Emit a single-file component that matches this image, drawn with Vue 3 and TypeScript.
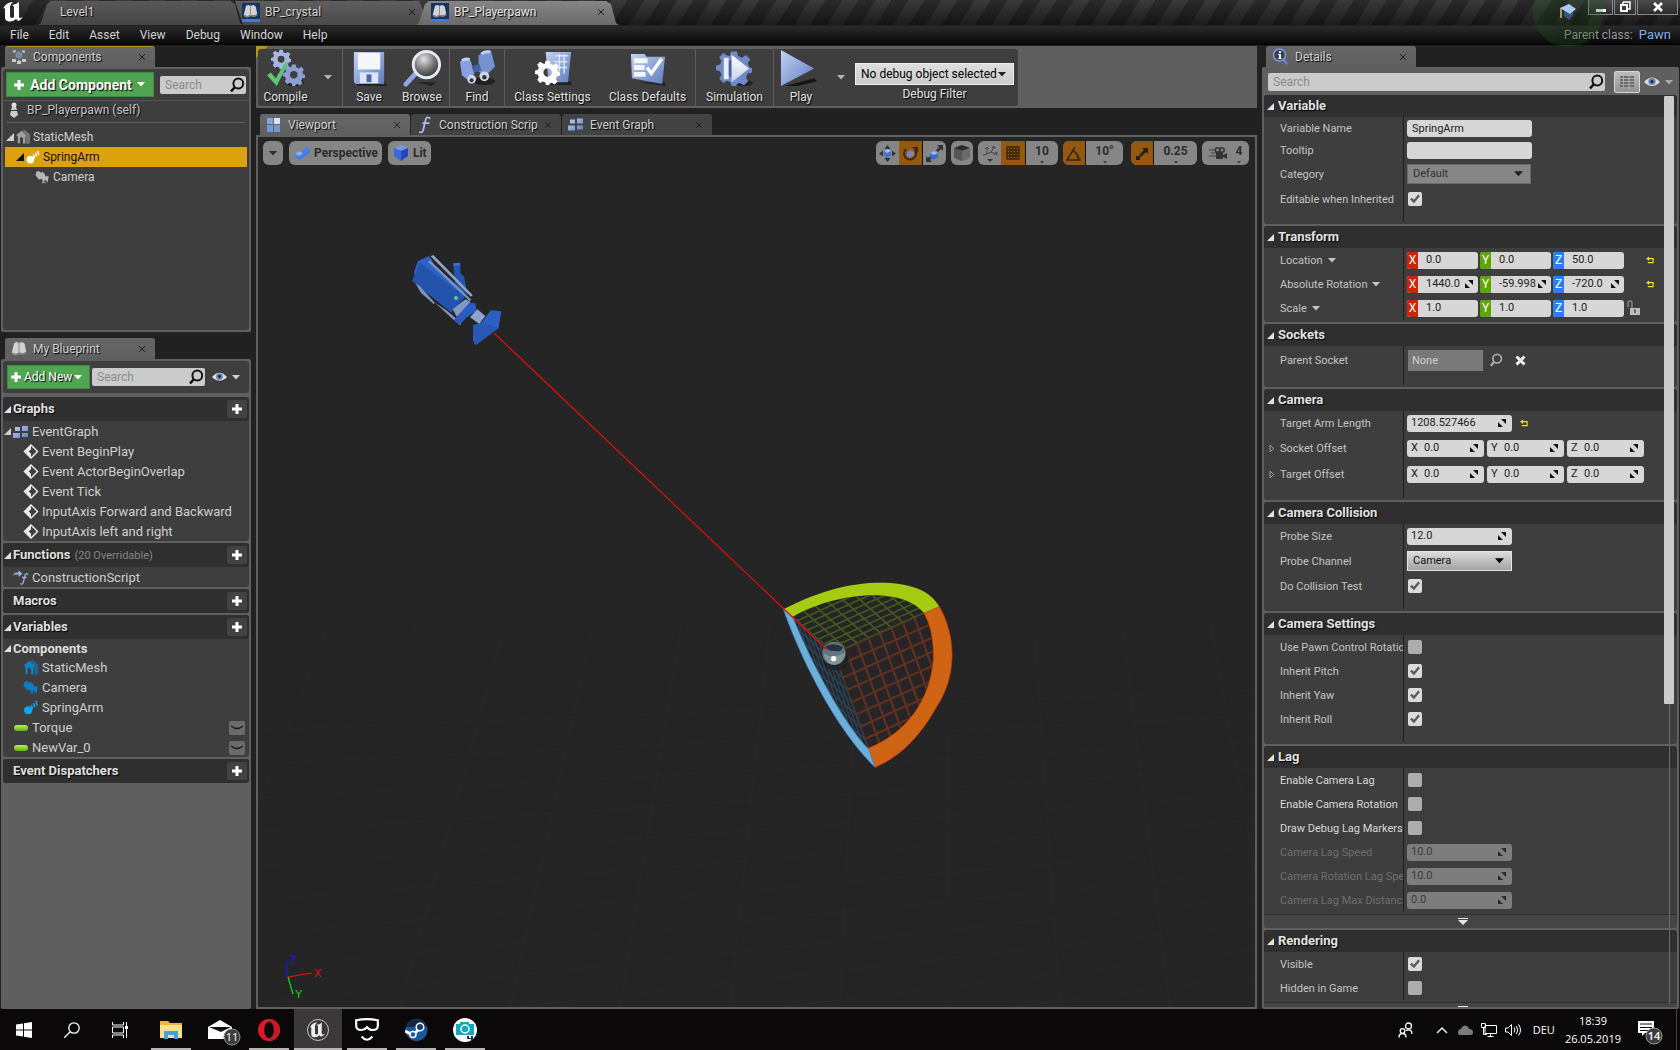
<script setup lang="ts">
type Axis = { axis: string; value: string; spin?: boolean }
type Row = {
  label: string
  kind: 'text' | 'select' | 'check' | 'vector' | 'offset' | 'num' | 'socket'
  size?: 'short' | 'mid' | 'tall'
  value?: string
  checked?: boolean
  disabled?: boolean
  bright?: boolean
  menu?: boolean
  reset?: boolean
  lock?: boolean
  axes?: Axis[]
}
type Section = { title: string; rows: Row[]; tight?: boolean; more?: boolean }

const menus = ['File', 'Edit', 'Asset', 'View', 'Debug', 'Window', 'Help']

const events = [
  'Event BeginPlay',
  'Event ActorBeginOverlap',
  'Event Tick',
  'InputAxis Forward and Backward',
  'InputAxis left and right',
]
const componentVars = [
  { name: 'StaticMesh', icon: 'i-mesh', color: '#0b83c4' },
  { name: 'Camera', icon: 'i-cam', color: '#0b7fc4' },
  { name: 'SpringArm', icon: 'i-spring', color: '#12a5f4' },
]
const plainVars = ['Torque', 'NewVar_0']

const axes = (x: string, y: string, z: string, spin = false): Axis[] => [
  { axis: 'X', value: x, spin },
  { axis: 'Y', value: y, spin },
  { axis: 'Z', value: z, spin },
]

const sections: Section[] = [
  {
    title: 'Variable',
    rows: [
      { label: 'Variable Name', kind: 'text', size: 'short', value: 'SpringArm' },
      { label: 'Tooltip', kind: 'text', size: 'short', value: '' },
      { label: 'Category', kind: 'select', size: 'mid', value: 'Default', disabled: true },
      { label: 'Editable when Inherited', kind: 'check', checked: true },
    ],
  },
  {
    title: 'Transform',
    tight: true,
    rows: [
      { label: 'Location', kind: 'vector', menu: true, reset: true, axes: axes('0.0', '0.0', '50.0') },
      { label: 'Absolute Rotation', kind: 'vector', menu: true, reset: true, axes: axes('1440.0', '-59.998', '-720.0', true) },
      { label: 'Scale', kind: 'vector', menu: true, lock: true, axes: axes('1.0', '1.0', '1.0') },
    ],
  },
  { title: 'Sockets', rows: [{ label: 'Parent Socket', kind: 'socket', size: 'tall', value: 'None' }] },
  {
    title: 'Camera',
    rows: [
      { label: 'Target Arm Length', kind: 'num', value: '1208.527466', reset: true },
      { label: 'Socket Offset', kind: 'offset', size: 'mid', axes: axes('0.0', '0.0', '0.0', true) },
      { label: 'Target Offset', kind: 'offset', size: 'mid', axes: axes('0.0', '0.0', '0.0', true) },
    ],
  },
  {
    title: 'Camera Collision',
    rows: [
      { label: 'Probe Size', kind: 'num', value: '12.0' },
      { label: 'Probe Channel', kind: 'select', size: 'mid', value: 'Camera' },
      { label: 'Do Collision Test', kind: 'check', checked: true },
    ],
  },
  {
    title: 'Camera Settings',
    rows: [
      { label: 'Use Pawn Control Rotation', kind: 'check' },
      { label: 'Inherit Pitch', kind: 'check', checked: true },
      { label: 'Inherit Yaw', kind: 'check', checked: true },
      { label: 'Inherit Roll', kind: 'check', checked: true },
    ],
  },
  {
    title: 'Lag',
    tight: true,
    more: true,
    rows: [
      { label: 'Enable Camera Lag', kind: 'check', bright: true },
      { label: 'Enable Camera Rotation', kind: 'check', bright: true },
      { label: 'Draw Debug Lag Markers', kind: 'check', bright: true },
      { label: 'Camera Lag Speed', kind: 'num', value: '10.0', disabled: true },
      { label: 'Camera Rotation Lag Speed', kind: 'num', value: '10.0', disabled: true },
      { label: 'Camera Lag Max Distance', kind: 'num', value: '0.0', disabled: true },
    ],
  },
  {
    title: 'Rendering',
    tight: true,
    more: true,
    rows: [
      { label: 'Visible', kind: 'check', checked: true },
      { label: 'Hidden in Game', kind: 'check' },
    ],
  },
]

const fieldId = (s: string, l: string) => (s + '-' + l).toLowerCase().replace(/[^a-z]+/g, '-')

type P = [number, number]
/* Lines of a skewed grid spanned by two screen-space vectors */
const mesh = (o: P, a: P, b: P, n: number) => {
  const out: { x1: number; y1: number; x2: number; y2: number }[] = []
  for (let i = 0; i <= n; i++) {
    const t = i / n
    out.push({ x1: o[0] + a[0] * t, y1: o[1] + a[1] * t, x2: o[0] + a[0] * t + b[0], y2: o[1] + a[1] * t + b[1] })
    out.push({ x1: o[0] + b[0] * t, y1: o[1] + b[1] * t, x2: o[0] + b[0] * t + a[0], y2: o[1] + b[1] * t + a[1] })
  }
  return out
}
const redMesh = mesh([192, 250], [310, -139], [118, 330], 9)
const greenMesh = mesh([192, 250], [310, -139], [-142, -126], 9)
const blueMesh = mesh([192, 250], [-142, -126], [118, 330], 9)

const floor = Array.from({ length: 12 }, (_, i) => ({
  a: `M258 ${730 + i * 34}L1255 ${690 + i * 26}`,
  b: `M${330 + i * 88} 620L${180 + i * 110} 1007`,
}))
</script>

<template>
  <div class="editor">
    <svg width="0" height="0" class="defs" aria-hidden="true">
      <defs>
        <linearGradient id="g-blue" x1="0" y1="0" x2="1" y2="1"><stop offset="0" stop-color="#c3d2f4" /><stop offset="1" stop-color="#5f7cbf" /></linearGradient>
        <linearGradient id="g-white" x1="0" y1="0" x2="0" y2="1"><stop offset="0" stop-color="#fff" /><stop offset="1" stop-color="#c4d0ea" /></linearGradient>
        <linearGradient id="g-pill" x1="0" y1="0" x2="0" y2="1"><stop offset="0" stop-color="#b7f05c" /><stop offset="1" stop-color="#5fb40c" /></linearGradient>
        <radialGradient id="g-lens" cx=".4" cy=".3" r=".8"><stop offset="0" stop-color="#e4e4e4" /><stop offset=".5" stop-color="#777" /><stop offset="1" stop-color="#1d1d1d" /></radialGradient>
      </defs>
      <symbol id="i-x" viewBox="0 0 8 8"><path d="M1 1l6 6M7 1L1 7" stroke="currentColor" stroke-width="1" /></symbol>
      <symbol id="i-plus" viewBox="0 0 12 12"><path d="M4.500 1h3v3.500h3.500v3h-3.500v3.500h-3v-3.500H1v-3h3.500z" fill="currentColor" /></symbol>
      <symbol id="i-down" viewBox="0 0 10 6"><path d="M0 0h10L5 5.500z" fill="currentColor" /></symbol>
      <symbol id="i-open" viewBox="0 0 8 8"><path d="M8 0v8H0z" fill="currentColor" /></symbol>
      <symbol id="i-shut" viewBox="0 0 6 10"><path d="M.8 1.300v7.400L5 5z" fill="none" stroke="currentColor" /></symbol>
      <symbol id="i-find" viewBox="0 0 16 16"><circle cx="9.300" cy="6.500" r="4.900" fill="none" stroke="currentColor" stroke-width="2" /><path d="M6 10l-4 4.500" stroke="currentColor" stroke-width="2.600" /></symbol>
      <symbol id="i-eye" viewBox="0 0 18 12"><path d="M1 6Q9-3 17 6Q9 14 1 6z" fill="#dcdcdc" /><circle cx="9" cy="5.500" r="3.600" fill="#6580b5" /><circle cx="9" cy="5.500" r="1.500" fill="#1c2540" /></symbol>
      <symbol id="i-spin" viewBox="0 0 8 8"><path d="M3 0h5v5zM0 3v5h5z" fill="currentColor" /></symbol>
      <symbol id="i-reset" viewBox="0 0 9 8"><path d="M3.500 0v5L0 2.500z" fill="currentColor" /><path d="M3 2.500h5V7H2" fill="none" stroke="currentColor" stroke-width="1.300" /></symbol>
      <symbol id="i-mesh" viewBox="0 0 16 16"><path d="M6 1l4-1 6 5v10l-3 1-2-1V8L8 4z" fill="currentColor" opacity=".55" /><path d="M0 6l6-5 5.500 5.500L10.500 8v7.500H8V9.500L6 8 4.500 9v6H2V7z" fill="currentColor" /></symbol>
      <symbol id="i-cam" viewBox="0 0 16 16"><path d="M1 2l3-1 2 2 2-1 3 3v2l4 0-1 7-3-3-2 2-2-3-3 1-4-5z" fill="currentColor" /><path d="M8 10l-1 5 6 0z" fill="currentColor" opacity=".6" /></symbol>
      <symbol id="i-spring" viewBox="0 0 16 16"><circle cx="5" cy="11" r="4.300" fill="currentColor" /><path d="M8.500 5l1 5M11 3l1 5M13.500 1l1 5" stroke="currentColor" stroke-width="1.600" /></symbol>
      <symbol id="i-event" viewBox="0 0 16 16"><path d="M8 1l7 7-7 7-7-7z" fill="none" stroke="#eee" stroke-width="1.500" /><path d="M1.500 8L8 1.500v4L5.500 8 8 10.500v4z" fill="#eee" /></symbol>
      <symbol id="i-graph" viewBox="0 0 16 14"><path d="M2 2h5v4H2zM9 1h6v5H9zM0 8h7v5H0zM9 8h6v4H9z" fill="url(#g-blue)" /></symbol>
      <symbol id="i-func" viewBox="0 0 16 20"><path d="M14 3c-3-3-5-1-5.500 2L6 15.500C5.500 18 4 19 1.500 17.500M5 8h8" fill="none" stroke="#a9bce9" stroke-width="2" /></symbol>
      <symbol id="i-cfunc" viewBox="0 0 17 16"><path d="M0 6q1-4 6-3.500V0l4 4-4 3.500V5Q2 4 0 6z" fill="#93acdb" /><path d="M16 5c-2-2-3-.5-3.500 1.500L11 13c-.5 2-1.500 2.500-3 1.500M9.500 8h5" fill="none" stroke="#93acdb" stroke-width="1.500" /></symbol>
      <symbol id="i-book" viewBox="0 0 20 18"><path d="M4 2l3-1 3 1 4-1 3 2 2 10-4 2-5-1-4 2-5-2z" fill="#d2d2d2" /><path d="M10 2v12" stroke="#777" /><path d="M1 14l5 2 4-2 5 1 4-2v2l-4 2-5-1-4 2-5-2z" fill="#8a8a8a" /></symbol>
      <symbol id="i-gear" viewBox="-12 -12 24 24"><path d="M-2-11h4l.7 3 2.600 1.100 2.700-1.700 2.800 2.800-1.700 2.700L10.200-.5 12 0v3l-3 .7-1.100 2.600 1.500 2.500-2.800 2.700-2.700-1.600-2 .8L1.500 12h-3l-.9-2.600-2.200-.9-2.500 1.500-2.700-2.800 1.500-2.500-1.100-2.600L-12 1.500v-3l2.700-.9 1-2.300-1.600-2.500 2.800-2.800 2.500 1.600L-2.700-8zM0-4a4 4 0 100 8 4 4 0 000-8z" fill="currentColor" /></symbol>
      <symbol id="i-logo" viewBox="0 0 24 24"><path d="M1 9Q4 2 11 2Q8 4 8 7v9q0 2 2 2 1 0 2-1V7q0-1-2-2 4 0 7-3v15q0 2 4 0-2 3-5 4l-2-2q-3 3-7 2.500-4-.5-4-4V9Q3 7 1 9z" fill="currentColor" /></symbol>
    </svg>

    <header class="titlebar">
      <svg class="logo" viewBox="0 0 24 24" aria-label="Unreal"><use href="#i-logo" /></svg>
      <nav class="doc-tabs" aria-label="Documents">
        <div class="doc level"><span>Level1</span></div>
        <div class="doc crystal">
          <svg width="18" height="19" viewBox="0 0 18 19"><rect width="18" height="16" fill="#173460" /><rect y="16" width="18" height="3" fill="#3c7be0" /><use href="#i-book" width="15" height="14" x="1" y="1" /></svg>
          <span>BP_crystal</span>
          <button class="x" aria-label="Close"><svg width="8" height="8"><use href="#i-x" /></svg></button>
        </div>
        <div class="doc pawn">
          <svg width="18" height="19" viewBox="0 0 18 19"><rect width="18" height="16" fill="#173460" /><rect y="16" width="18" height="3" fill="#3c7be0" /><use href="#i-book" width="15" height="14" x="1" y="1" /></svg>
          <span>BP_Playerpawn</span>
          <button class="x" aria-label="Close"><svg width="8" height="8"><use href="#i-x" /></svg></button>
        </div>
      </nav>
      <div class="glow">
        <svg width="18" height="16" viewBox="0 0 18 16"><path d="M5 7v5l5 4 4-5V6z" fill="#33567f" /><path d="M1 4l9-4 7 5-6 5z" fill="#a9cdf2" /><path d="M2 4v10" stroke="#d9b873" stroke-width="1.500" /></svg>
      </div>
      <div class="win">
        <button class="w25" aria-label="Minimize"><svg width="12" height="12"><path d="M1 8h10v3H1z" fill="#fff" /></svg></button>
        <button class="w22" aria-label="Restore"><svg width="12" height="12"><path d="M4 1h7v7H9M4 1v2" fill="none" stroke="#fff" stroke-width="1.500" /><path d="M2 4h6v6H2z" fill="none" stroke="#fff" stroke-width="2" /></svg></button>
        <button class="w41" aria-label="Close"><svg width="12" height="12"><path d="M2 2l8 8M10 2l-8 8" stroke="#fff" stroke-width="2.600" /></svg></button>
      </div>
    </header>

    <div class="menubar">
      <nav><button v-for="m in menus" :key="m">{{ m }}</button></nav>
      <p>Parent class: <a href="#pawn">Pawn</a></p>
    </div>

    <main class="work">
      <aside class="left">
        <section class="dock comps">
          <div class="tab gold">
            <svg width="16" height="15" viewBox="0 0 16 15"><circle cx="8" cy="5" r="3.500" fill="#7d8aa3" /><path d="M3 3V1h2M11 1h2v2M8 10v2" fill="none" stroke="#c9c9c9" stroke-width="1.500" /><path d="M1 9h4v3H1zM11 9h4v3h-4zM6 11h4v3H6z" fill="#c9c9c9" /></svg>
            <span>Components</span>
            <button class="x" aria-label="Close"><svg width="8" height="8"><use href="#i-x" /></svg></button>
          </div>
          <div class="frame">
            <div class="inner">
              <div class="row-tools">
                <button class="green big"><svg width="12" height="12"><use href="#i-plus" /></svg><span>Add Component</span><svg width="8" height="5"><use href="#i-down" /></svg></button>
                <label class="search"><input type="search" placeholder="Search" aria-label="Search components" /><svg width="16" height="16"><use href="#i-find" /></svg></label>
              </div>
              <div class="self"><svg width="10" height="16" viewBox="0 0 10 16"><circle cx="5" cy="3" r="2.500" fill="#ddd" /><path d="M3 5h4l1 3H2zM2 9h6l1 4-4 3-4-3z" fill="#ccc" /></svg><span>BP_Playerpawn (self)</span></div>
              <ul class="tree small">
                <li class="lv0"><svg width="8" height="8"><use href="#i-open" /></svg><svg class="ico" width="14" height="14" color="#a2a2a2"><use href="#i-mesh" /></svg>StaticMesh</li>
                <li class="lv1 sel"><svg width="8" height="8" color="#111"><use href="#i-open" /></svg><svg class="ico" width="14" height="14" color="#fff"><use href="#i-spring" /></svg>SpringArm</li>
                <li class="lv2"><svg class="ico" width="15" height="14" color="#b4b4b4"><use href="#i-cam" /></svg>Camera</li>
              </ul>
            </div>
          </div>
        </section>

        <section class="dock blueprint">
          <div class="tab">
            <svg width="16" height="15"><use href="#i-book" /></svg>
            <span>My Blueprint</span>
            <button class="x" aria-label="Close"><svg width="8" height="8"><use href="#i-x" /></svg></button>
          </div>
          <div class="frame stack">
            <div class="block tools">
              <button class="green"><svg width="12" height="12"><use href="#i-plus" /></svg><span>Add New</span><svg width="8" height="5"><use href="#i-down" /></svg></button>
              <label class="search"><input type="search" placeholder="Search" aria-label="Search blueprint" /><svg width="16" height="16"><use href="#i-find" /></svg></label>
              <button class="bare" aria-label="View options"><svg width="17" height="12"><use href="#i-eye" /></svg><svg width="8" height="5"><use href="#i-down" /></svg></button>
            </div>
            <div class="block">
              <h3><svg width="7" height="7"><use href="#i-open" /></svg>Graphs<button aria-label="Add graph"><svg width="12" height="12"><use href="#i-plus" /></svg></button></h3>
              <ul class="tree">
                <li class="in0"><svg width="7" height="7"><use href="#i-open" /></svg><svg class="ico" width="16" height="14"><use href="#i-graph" /></svg>EventGraph</li>
                <li v-for="e in events" :key="e" class="in1"><svg class="ico" width="16" height="15"><use href="#i-event" /></svg>{{ e }}</li>
              </ul>
            </div>
            <div class="block">
              <h3><svg width="7" height="7"><use href="#i-open" /></svg>Functions<small>(20 Overridable)</small><button aria-label="Add function"><svg width="12" height="12"><use href="#i-plus" /></svg></button></h3>
              <ul class="tree">
                <li class="in2"><svg class="ico" width="16" height="15"><use href="#i-cfunc" /></svg>ConstructionScript</li>
              </ul>
            </div>
            <div class="block"><h3><i></i>Macros<button aria-label="Add macro"><svg width="12" height="12"><use href="#i-plus" /></svg></button></h3></div>
            <div class="block">
              <h3><svg width="7" height="7"><use href="#i-open" /></svg>Variables<button aria-label="Add variable"><svg width="12" height="12"><use href="#i-plus" /></svg></button></h3>
              <ul class="tree">
                <li class="head"><svg width="7" height="7"><use href="#i-open" /></svg>Components</li>
                <li v-for="c in componentVars" :key="c.name" class="in1"><svg class="ico" width="16" height="15" :color="c.color"><use :href="'#' + c.icon" /></svg>{{ c.name }}</li>
                <li v-for="v in plainVars" :key="v" class="in2"><svg class="ico" width="16" height="14"><rect x="1" y="4" width="14" height="6" rx="3" fill="url(#g-pill)" /></svg>{{ v }}<button class="lid" aria-label="Toggle visibility"><svg width="16" height="8" viewBox="0 0 16 8"><path d="M2 2q6 5 12 0" fill="none" stroke="#1c1c1c" stroke-width="1.300" /></svg></button></li>
              </ul>
            </div>
            <div class="block"><h3><i></i>Event Dispatchers<button aria-label="Add dispatcher"><svg width="12" height="12"><use href="#i-plus" /></svg></button></h3></div>
          </div>
        </section>
      </aside>

      <div class="center">
        <div class="toolbar">
          <div class="tools-in">
            <button class="tool w55"><svg viewBox="0 0 40 40"><ellipse cx="29" cy="34" rx="10" ry="4" fill="#222" /><use href="#i-gear" x="5" y="0" width="21" height="21" color="#a6b7e6" /><use href="#i-gear" x="17" y="15" width="23" height="23" color="#8d9ed2" /><path d="M1 27l4-3 5 6L20 13l3 1L11 38z" fill="#5fc474" /></svg><span>Compile</span></button>
            <button class="drop w29" aria-label="Compile options"><svg width="8" height="5"><use href="#i-down" /></svg></button>
            <hr />
            <button class="tool w52"><svg viewBox="0 0 40 40"><path d="M6 34h30l2 4H8z" fill="#222" /><path d="M4 3h31v33H6l-2-2z" fill="url(#g-blue)" /><path d="M8 4h23v17H8z" fill="#f5f7fd" /><path d="M10 24h19v11H10z" fill="#dde4f4" /><path d="M17 26h5v8h-5z" fill="#4c65a5" /></svg><span>Save</span></button>
            <button class="tool w54"><svg viewBox="0 0 40 40"><path d="M14 34h20l-5 4z" fill="#222" /><path d="M13 25L3 36" stroke="#8ea6df" stroke-width="5" stroke-linecap="round" /><circle cx="24" cy="16" r="13.500" fill="url(#g-lens)" stroke="#e3e9f7" stroke-width="3" /></svg><span>Browse</span></button>
            <hr />
            <button class="tool w54"><svg viewBox="0 0 40 40"><ellipse cx="27" cy="33" rx="11" ry="4" fill="#202020" /><path d="M2 13q5-5 11-1l4 13-8 6-5-4z" fill="#86a1dd" /><path d="M21 7q6-7 13-5l4 16-10 10-7-5z" fill="#7691cf" /><path d="M14 18l8-3 2 7-8 2z" fill="#4661a5" /><circle cx="14" cy="31" r="4.500" fill="#cbd5ec" /><circle cx="27" cy="28" r="5" fill="#cbd5ec" /><circle cx="14" cy="32" r="2" fill="#333" /><circle cx="27" cy="29" r="2.300" fill="#333" /><path d="M4 12q4-3 8-1M24 5q4-3 9-2" stroke="#c2d1f5" stroke-width="3" fill="none" /></svg><span>Find</span></button>
            <hr />
            <button class="tool w95"><svg viewBox="0 0 40 40"><path d="M12 33h26l2 4H14z" fill="#222" /><path d="M13 3h26l-3 31H16z" fill="url(#g-blue)" /><path d="M23 7h13M22 13h13M22 19h13M27 5v18M32 5v20" stroke="#dbe5fb" stroke-width="1.500" /><use href="#i-gear" x="2" y="11" width="26" height="26" color="#fff" /></svg><span>Class Settings</span></button>
            <button class="tool w95"><svg viewBox="0 0 40 40"><path d="M10 34l28 0 1 4z" fill="#222" /><path d="M3 5h14l2 3h19l-3 28L4 30z" fill="url(#g-blue)" /><path d="M6 12h14M6 19h11M6 26h12" stroke="#f3f6fd" stroke-width="5" /><path d="M18 20l3-2 3 4 9-13 3 2-12 17z" fill="#fff" /></svg><span>Class Defaults</span></button>
            <hr />
            <button class="tool w77"><svg viewBox="0 0 40 40"><ellipse cx="29" cy="35" rx="10" ry="3" fill="#222" /><use href="#i-gear" x="1" y="1" width="37" height="37" color="#7189c8" /><circle cx="19" cy="20" r="9" fill="#4860a0" /><path d="M9 9l5 0v22H9z" fill="#e6ecfa" /><path d="M17 6l18 14-18 14z" fill="url(#g-white)" /></svg><span>Simulation</span></button>
            <hr />
            <button class="tool w54 play"><svg viewBox="0 0 40 40"><path d="M6 38l30-8 3 3-20 5z" fill="#151515" /><path d="M2 1l34 19L2 38z" fill="url(#g-blue)" /></svg><span>Play</span></button>
            <button class="drop w25" aria-label="Play options"><svg width="8" height="5"><use href="#i-down" /></svg></button>
            <div class="debug">
              <div class="pick white"><select id="debug-filter"><option>No debug object selected</option></select><svg width="8" height="5"><use href="#i-down" /></svg></div>
              <label for="debug-filter">Debug Filter</label>
            </div>
          </div>
        </div>

        <nav class="view-tabs" aria-label="Views">
          <div class="tab"><svg width="16" height="16" viewBox="0 0 16 16"><path d="M1 1h6v6H1z" fill="#83a5dc" /><path d="M8 1h6v6H8z" fill="#d6e3fa" /><path d="M1 8h6v7H1zM8 8h6v7H8z" fill="#7597d2" /></svg><span>Viewport</span><button class="x" aria-label="Close"><svg width="8" height="8"><use href="#i-x" /></svg></button></div>
          <div class="tab off"><svg width="16" height="18"><use href="#i-func" /></svg><span>Construction Script</span><button class="x" aria-label="Close"><svg width="8" height="8"><use href="#i-x" /></svg></button></div>
          <div class="tab off"><svg width="16" height="15"><use href="#i-graph" /></svg><span>Event Graph</span><button class="x" aria-label="Close"><svg width="8" height="8"><use href="#i-x" /></svg></button></div>
        </nav>

        <div class="viewport">
          <svg class="stage" viewBox="258 137 997 870" role="img" aria-label="Spring arm with camera and rotation gizmo">
            <g stroke="#303030" fill="none" opacity=".3"><template v-for="(f, i) in floor" :key="i"><path :d="f.a" /><path :d="f.b" /></template></g>
            <svg x="390" y="240" width="130" height="120" viewBox="0 0 390 360">
              <path d="M72 95l12-32 32-15 10 12 5 14-60 30z" fill="#2d60c4" />
              <path d="M190 71l20-2 2 32 10 8 6 32 6 24-26-20-14-18z" fill="#2456ae" />
              <path d="M190 70l20-2 1 8-20 2z" fill="#3a72d8" />
              <path d="M66 122l24-54 30-4 92 84 12 24-40 46z" fill="#2453ad" />
              <path d="M90 68l30-4 100 90 4 14z" fill="#2f65c9" />
              <path d="M76 130l14 9 45 50-4 3-38-33z" fill="#7b93c0" />
              <path d="M122 49l8-4 118 120-5 5z" fill="#93a5c6" /><path d="M114 65l6-4 124 118-5 5z" fill="#7e93bb" />
              <path d="M135 188l54 50 24 18-2-10-40-34z" fill="#8196bf" />
              <path d="M188 208l38-30 16 8-20 24-22 20z" fill="#7e98c8" />
              <path d="M192 240l16-18 30-34 18 2 4 22-32 22-20 22z" fill="#2b5cbd" />
              <path d="M240 232l22-24 24 20-18 24z" fill="#8ea3cb" />
              <path d="M250 255l24-6 28-38 32 3-8 50-70 52-7-14z" fill="#2d5fc2" /><path d="M250 260l26-10 50 14-68 50-7-10z" fill="#2858b4" />
              <circle cx="198" cy="174" r="6" fill="#60c99b" />
            </svg>
            <svg x="770" y="570" width="200" height="210" viewBox="0 0 600 630">
              <clipPath id="c-red"><path d="M192 250L462 130C482 165 492 210 490 270C480 390 410 490 294 535z" /></clipPath>
              <clipPath id="c-green"><path d="M192 250L68 140C130 105 220 76 310 76C380 76 435 95 462 130z" /></clipPath>
              <clipPath id="c-blue"><path d="M192 250L68 140C128 290 225 465 296 538z" /></clipPath>
              <g clip-path="url(#c-red)" stroke="#5e2f22" stroke-width="7"><line v-for="(l, i) in redMesh" :key="i" v-bind="l" /></g>
              <g clip-path="url(#c-green)" stroke="#46581f" stroke-width="5"><line v-for="(l, i) in greenMesh" :key="i" v-bind="l" /></g>
              <g clip-path="url(#c-blue)" stroke="#2b4459" stroke-width="4"><line v-for="(l, i) in blueMesh" :key="i" v-bind="l" /></g>
              <path d="M40 118C150 60 250 38 330 38C420 38 480 60 508 110L462 130C435 95 380 76 310 76C220 76 130 105 68 140z" fill="#a5cb12" />
              <path d="M508 110C560 200 560 320 500 410C450 500 390 560 315 592L294 535C410 490 480 390 490 270C492 210 482 165 462 130z" fill="#cf6414" stroke="#d43c08" stroke-width="2" />
              <path d="M40 118L68 140C128 290 225 465 296 538L315 592C210 490 105 300 40 118z" fill="#6cb0da" stroke="#4383d8" stroke-width="2" />
              <circle cx="198" cy="262" r="40" fill="#151b1e" opacity=".6" />
              <circle cx="192" cy="250" r="35" fill="#5f7680" /><path d="M165 230q25-16 55 2-10 18-24 10-16 4-31-12z" fill="#23323c" /><path d="M160 250q30 20 66-4-6 38-34 38-24 0-32-34z" fill="#81949b" /><circle cx="191" cy="266" r="8" fill="#fff" />
            </svg>
            <path d="M494 333L827 650" stroke="#e80c0c" stroke-width="1.200" />
            <g fill="none" stroke-width="1.200"><path d="M288 977L312 973" stroke="#f01010" /><path d="M287 977V961" stroke="#1414f0" /><path d="M288 977l5 17" stroke="#10e010" /></g>
            <g font-family="Liberation Sans, sans-serif" font-size="11"><text x="290" y="964" fill="#1818d8">Z</text><text x="314" y="977" fill="#e01010">X</text><text x="295" y="998" fill="#10d810">Y</text></g>
          </svg>
          <div class="overlay">
            <div class="pills left-pills">
              <button class="pill w20" aria-label="Viewport options"><svg width="8" height="5"><use href="#i-down" /></svg></button>
              <button class="pill"><svg width="18" height="16" viewBox="0 0 18 16"><path d="M2 9l4-3 3 1 4-5 4 2v4l-6 4-4 3-5-3z" fill="#4a7de2" /><path d="M2 9l4-3 4 2-3 3z" fill="#86aef4" /></svg>Perspective</button>
              <button class="pill"><svg width="18" height="18" viewBox="0 0 18 18"><path d="M2 4l7-3 7 3-7 3z" fill="#7097f2" /><path d="M2 4l7 3v10l-7-5z" fill="#3c67de" /><path d="M16 4L9 7v10l7-5z" fill="#2545b8" /></svg>Lit</button>
            </div>
            <div class="pills">
              <div class="group">
                <button class="w23" aria-label="Move"><svg width="17" height="17" viewBox="0 0 17 17"><path d="M8.500 0l3 4h-6zM8.500 17l3-4h-6zM0 8.500l4-3v6zM17 8.500l-4-3v6z" fill="#333" /><path d="M5 6l4-2 3 2v4l-4 3-3-2z" fill="#4471d2" /><path d="M5 6l4-2 3 2-4 2z" fill="#a0bcf4" /></svg></button>
                <button class="on w24" aria-label="Rotate"><svg width="17" height="17" viewBox="0 0 17 17"><path d="M4 4A6 6 0 1013 5" fill="none" stroke="#3a2a12" stroke-width="2" /><path d="M10 2h6v6z" fill="#3a2a12" /><path d="M5 7l4-2 3 2v3l-4 3-3-2z" fill="#7585bb" /></svg></button>
                <button class="w23" aria-label="Scale"><svg width="17" height="17" viewBox="0 0 17 17"><path d="M17 0v6l-2-2-3 3-2-2 3-3-2-2zM0 17v-6l2 2 3-3 2 2-3 3 2 2z" fill="#333" /><path d="M4 8l4-2 4 2v4l-4 3-4-3z" fill="#3e6bd0" /><path d="M4 8l4-2 4 2-4 2z" fill="#9cb9f4" /></svg></button>
              </div>
              <div class="group"><button class="w22" aria-label="Coordinate space"><svg width="18" height="18" viewBox="0 0 18 18"><path d="M1 4l8-3 8 3-8 3z" fill="#2a2a2a" /><path d="M1 4l8 3v10l-8-3z" fill="#555" /><path d="M17 4L9 7v10l8-3z" fill="#6a6a6a" /></svg></button></div>
              <div class="group">
                <button class="w23 col" aria-label="Surface snapping"><svg width="16" height="17" viewBox="0 0 16 17"><path d="M1 10q5-1 8-3 3 3 6 0M9 7l3-5M5 9V2M3 4l2-2 2 2M12 10l3-3v4M10 3l2-2 1 3" fill="none" stroke="#474747" /><path d="M5 14h6l-3 3z" fill="#333" /></svg></button>
                <button class="on w25" aria-label="Grid snap"><svg width="14" height="14"><path d="M1 1h12v12H1zM4 1v12M7 1v12M10 1v12M1 4h12M1 7h12M1 10h12" fill="none" stroke="#36240c" stroke-width="1.300" /></svg></button>
                <button class="w32 num-btn">10<svg width="4" height="3"><use href="#i-down" /></svg></button>
              </div>
              <div class="group">
                <button class="on w23" aria-label="Angle snap"><svg width="16" height="15" viewBox="0 0 16 15"><path d="M15 14H1L9 1M7 5q5 2 5 8M12 9l1 5" fill="none" stroke="#36240c" stroke-width="1.500" /></svg></button>
                <button class="w37 num-btn">10°<svg width="4" height="3"><use href="#i-down" /></svg></button>
              </div>
              <div class="group apart">
                <button class="on w23" aria-label="Scale snap"><svg width="13" height="13"><path d="M12 1v6l-2-2-5 5-2-2 5-5-2-2zM0 9h4v4H0z" fill="#2c1d09" /></svg></button>
                <button class="w43 num-btn">0.25<svg width="4" height="3"><use href="#i-down" /></svg></button>
              </div>
              <div class="group">
                <button class="w47 speed" aria-label="Camera speed 4"><svg width="18" height="13" viewBox="0 0 18 13"><path d="M0 3h7M2 6h5M0 9h7" stroke="#444" /><path d="M7 5h7v7H7zM14 8l4-2v6l-4-2z" fill="#333" /><circle cx="8.500" cy="3" r="2.200" fill="none" stroke="#333" stroke-width="1.500" /><circle cx="13" cy="3" r="2.200" fill="none" stroke="#333" stroke-width="1.500" /></svg><span class="num-btn">4<svg width="4" height="3"><use href="#i-down" /></svg></span></button>
              </div>
            </div>
          </div>
        </div>
      </div>

      <aside class="right dock">
        <div class="tab">
          <svg width="17" height="17" viewBox="0 0 17 17"><path d="M11 11l4 5" stroke="#5d85dc" stroke-width="2.500" /><circle cx="7.500" cy="7" r="6" fill="#393f4d" stroke="#7e9ee2" stroke-width="1.500" /><path d="M7 3h2v2H7zM6 6h3v4h1v1H6v-1h1V7H6z" fill="#f0f0f0" /></svg>
          <span>Details</span>
          <button class="x" aria-label="Close"><svg width="8" height="8"><use href="#i-x" /></svg></button>
        </div>
        <div class="frame details">
          <div class="detail-tools">
            <label class="search"><input type="search" placeholder="Search" aria-label="Search details" /><svg width="16" height="16"><use href="#i-find" /></svg></label>
            <button class="matrix" aria-label="Property matrix"><svg width="14" height="14"><path d="M0 2h3M0 5h3M0 8h3M0 11h3M4 2h10M4 5h10M4 8h10M4 11h10" stroke="#6c6c6c" stroke-width="2" /><path d="M9 0v14" stroke="#bbb" /></svg></button>
            <button class="bare" aria-label="View options"><svg width="18" height="12"><use href="#i-eye" /></svg><svg width="8" height="5" color="#aaa"><use href="#i-down" /></svg></button>
          </div>
          <div class="props">
            <section v-for="s in sections" :key="s.title" class="sec">
              <h3><svg width="7" height="7"><use href="#i-open" /></svg>{{ s.title }}</h3>
              <div class="body" :class="{ tight: s.tight }">
                <div v-for="r in s.rows" :key="r.label" class="prop" :class="[r.size, { dim: r.disabled && r.kind === 'num', bright: r.bright }]">
                  <label class="name" :for="fieldId(s.title, r.label)">
                    <svg v-if="r.kind === 'offset'" class="shut" width="6" height="9"><use href="#i-shut" /></svg>{{ r.label }}<svg v-if="r.menu" class="caret" width="8" height="5"><use href="#i-down" /></svg>
                  </label>
                  <div class="val">
                    <input v-if="r.kind === 'text'" :id="fieldId(s.title, r.label)" class="box" type="text" :value="r.value" />
                    <input v-else-if="r.kind === 'check'" :id="fieldId(s.title, r.label)" type="checkbox" :checked="r.checked" />
                    <div v-else-if="r.kind === 'select'" class="pick" :class="r.disabled ? 'flat' : 'shiny'">
                      <select :id="fieldId(s.title, r.label)" :disabled="r.disabled"><option>{{ r.value }}</option></select><svg width="9" height="6"><use href="#i-down" /></svg>
                    </div>
                    <template v-else-if="r.kind === 'vector'">
                      <label v-for="(a, i) in r.axes" :key="a.axis" class="axis" :class="'ax' + a.axis"><span>{{ a.axis }}</span><input :id="i === 0 ? fieldId(s.title, r.label) : undefined" type="text" :value="a.value" /><svg v-if="a.spin" width="8" height="8"><use href="#i-spin" /></svg></label>
                      <svg v-if="r.lock" class="lock" width="14" height="16" viewBox="0 0 14 16"><path d="M1 7V3q0-2 2-2t2 2v5" fill="none" stroke="#8c8c8c" stroke-width="1.300" /><path d="M3 8h10v7H3z" fill="#bdbdbd" /><path d="M8 9.500v3.500" stroke="#444" stroke-width="1.500" /></svg>
                    </template>
                    <template v-else-if="r.kind === 'offset'">
                      <label v-for="(a, i) in r.axes" :key="a.axis" class="num off"><span>{{ a.axis }}</span><input :id="i === 0 ? fieldId(s.title, r.label) : undefined" type="text" :value="a.value" /><svg width="8" height="8"><use href="#i-spin" /></svg></label>
                    </template>
                    <div v-else-if="r.kind === 'num'" class="num"><input :id="fieldId(s.title, r.label)" type="text" :value="r.value" :disabled="r.disabled" /><svg width="8" height="8"><use href="#i-spin" /></svg></div>
                    <template v-else>
                      <input :id="fieldId(s.title, r.label)" class="socket" type="text" :value="r.value" />
                      <button class="bare s1" aria-label="Browse sockets"><svg width="14" height="14" color="#aaa"><use href="#i-find" /></svg></button>
                      <button class="bare s2" aria-label="Clear"><svg width="11" height="11"><path d="M1.500 1.500l8 8M9.500 1.500l-8 8" stroke="#eee" stroke-width="3" /></svg></button>
                    </template>
                    <button v-if="r.reset" class="reset" :class="{ far: r.kind === 'vector' }" aria-label="Reset to default"><svg width="8" height="8"><use href="#i-reset" /></svg></button>
                  </div>
                </div>
              </div>
              <button v-if="s.more" class="more" aria-label="Show advanced"><svg width="10" height="8"><path d="M0 0h10v1H0zM0 2h10L5 7z" fill="#e6e6e6" /></svg></button>
            </section>
            <div class="scroll"><i></i></div>
          </div>
        </div>
      </aside>
    </main>

    <footer class="taskbar">
      <div class="fixed-icons">
        <button aria-label="Start"><svg width="16" height="16"><path d="M0 2.500l7-1V7.500H0zM8 1.300L16 0v7.500H8zM0 8.500h7v6l-7-1zM8 8.500h8V16l-8-1.200z" fill="#fff" /></svg></button>
        <button aria-label="Search"><svg width="16" height="16"><circle cx="10" cy="6" r="5.200" fill="none" stroke="#fff" stroke-width="1.300" /><path d="M6 10l-6 6" stroke="#fff" stroke-width="1.300" /></svg></button>
        <button aria-label="Task view"><svg width="16" height="16"><path d="M.5 0v3h11V0M.5 16v-3h11v3M.5 5h11v6H.5zM14.500 0v16" fill="none" stroke="#fff" /><path d="M13 4h3v3h-3z" fill="#fff" /></svg></button>
      </div>
      <div class="apps">
        <button class="run" aria-label="Explorer"><svg width="22" height="20"><path d="M0 1h8l2 2h12v15H0z" fill="#e9b93b" /><path d="M0 5h22v13H0z" fill="#fbe08b" /><path d="M4 11h14v8h-4v-4H8v4H4z" fill="#3aa4e0" /></svg></button>
        <button aria-label="Mail"><svg width="42" height="34" viewBox="-8 -5 42 34"><path d="M1 9l12-7 12 7v12H1z" fill="#fff" /><path d="M2 9h22l-10 5z" fill="#111" /><circle cx="25" cy="19" r="8" fill="#3d3d3d" stroke="#8e8e8e" /><text x="25" y="23" text-anchor="middle" fill="#fff" font-size="11" font-family="Open Sans, sans-serif">11</text></svg></button>
        <button class="run" aria-label="Opera"><svg width="22" height="22"><circle cx="11" cy="11" r="11" fill="#e0182d" /><path d="M11 0a11 11 0 010 22z" fill="#c61a26" /><ellipse cx="11" cy="11" rx="4.800" ry="8.300" fill="#0a0a0a" /></svg></button>
        <button class="run active" aria-label="Unreal Engine"><svg width="24" height="24"><circle cx="12" cy="12" r="10.500" fill="none" stroke="#c6c6c6" /><use href="#i-logo" x="3" y="3" width="18" height="18" color="#eee" /></svg></button>
        <button class="run" aria-label="Mixed Reality"><svg width="26" height="24" viewBox="0 0 24 22"><path d="M2 2q10-2 20 0v5q0 4-5 4-3 0-5-2.500Q10 11 7 11 2 11 2 7z" fill="none" stroke="#fff" stroke-width="2" /><path d="M7 17q5 6 10 0" fill="none" stroke="#fff" stroke-width="2" /></svg></button>
        <button class="run" aria-label="Steam"><svg width="23" height="22"><circle cx="11.500" cy="11" r="11" fill="#16599a" /><path d="M1 8a11 11 0 0121 0z" fill="#16263f" /><path d="M0 12l8 4 8-8" fill="none" stroke="#fff" stroke-width="3" /><circle cx="15" cy="8" r="3.800" fill="#16416f" stroke="#fff" stroke-width="1.500" /><circle cx="8" cy="15.500" r="3" fill="#16599a" stroke="#fff" stroke-width="1.500" /></svg></button>
        <button class="run" aria-label="Capture"><svg width="24" height="24"><circle cx="12" cy="12" r="12" fill="#fff" /><path d="M3 6h4V4h9v2h5v11H3z" fill="#12a9bd" /><circle cx="12" cy="11" r="4" fill="#12a9bd" stroke="#fff" stroke-width="1.500" /><path d="M14 18h2v2h2v-2h2v4h-2v-1h-4z" fill="#234" /></svg></button>
      </div>
      <div class="tray">
        <svg width="16" height="16"><circle cx="10.500" cy="4" r="3" fill="none" stroke="#fff" stroke-width="1.300" /><circle cx="4.500" cy="9" r="2.300" fill="none" stroke="#fff" stroke-width="1.300" /><path d="M1 15.500q0-4 3.500-4t3.500 4M8 8.500q6-2 6 3.500" fill="none" stroke="#fff" stroke-width="1.300" /></svg>
        <svg class="up" width="12" height="8"><path d="M1 7l5-5 5 5" fill="none" stroke="#fff" stroke-width="1.400" /></svg>
        <svg width="16" height="11"><path d="M1 9q0-4 3-4 2-5 6-3 2 1 2 3 4 0 4 3t-2 3H4q-3 0-3-2z" fill="#7b7b7b" /></svg>
        <svg width="16" height="14"><path d="M4 2.500h11.500v8H4zM9.500 10.500v3M6.500 13.500h6M.5.5h4v4h-4zM2.500 4.500v7H6" fill="none" stroke="#fff" /></svg>
        <svg width="16" height="14"><path d="M.5 5h2.500L6.500 1.500v11L3 9H.5zM9 4.500q2 2.500 0 5M11.300 3q3 4 0 8M13.500 1.500q4 5.500 0 11" fill="none" stroke="#fff" /></svg>
        <span>DEU</span>
        <div class="clock"><time>18:39</time><time>26.05.2019</time></div>
        <svg class="note" width="28" height="34" viewBox="0 -5 28 34"><path d="M1 3h16v12H8l-3 3v-3H1z" fill="#fff" /><path d="M3 6h12M3 9.500h12M3 12.500h9" stroke="#111" /><circle cx="17" cy="18" r="8" fill="#3d3d3d" stroke="#9a9a9a" /><text x="17" y="22" text-anchor="middle" fill="#fff" font-size="11" font-weight="600" font-family="Open Sans, sans-serif">14</text></svg>
      </div>
    </footer>
  </div>
</template>

<style>
body { margin: 0; background: #000; }
</style>

<style scoped>
.editor { height: 100vh; display: flex; flex-direction: column; overflow: hidden; background: #212121; color: #d2d2d2; font: 12px/16px Roboto, sans-serif; }
.editor *, .editor *::before { box-sizing: border-box; }
.defs { position: absolute; }
svg { flex: none; display: block; }
button { display: flex; align-items: center; justify-content: center; margin: 0; padding: 0; border: 0; background: none; color: inherit; font: inherit; }
input, select { font: inherit; color: inherit; margin: 0; border: 0; min-width: 0; outline: 0; appearance: none; }
h3, ul, p { margin: 0; padding: 0; list-style: none; }
.tab, .doc, .menubar, h3, .tool, .debug, .self, .green, .bare { text-shadow: 1px 1px 1px #000; }

/* title bar */
.titlebar { position: relative; flex: none; height: 25px; display: flex; background: linear-gradient(#0000, #0008), repeating-linear-gradient(122deg, #2a2a2a 0 14px, #3a3a3a 15px 28px); }
.logo { width: 24px; height: 24px; margin: 0 12px 0 2px; color: #fff; }
.doc-tabs { display: flex; padding-top: 1px; flex: 1; }
.doc { display: flex; align-items: center; height: 24px; padding-bottom: 2px; }
.doc .x { margin-left: auto; margin-right: 14px; }
.level { width: 205px; padding-left: 22px; background: linear-gradient(#585858, #464646); clip-path: polygon(0 100%, 3px 92%, 9px 12%, 13px 0, 192px 0, 197px 12%, 202px 92%, 100% 100%); position: relative; z-index: 1; }
.crystal { width: 195px; margin-left: -8px; padding-left: 7px; gap: 5px; background: linear-gradient(#5e5e5e, #4a4a4a); clip-path: polygon(0 0, 184px 0, 100% 100%, 8px 100%); }
.pawn { width: 203px; margin-left: -14px; padding-left: 15px; gap: 5px; background: linear-gradient(#858585, #6a6a6a); clip-path: polygon(0 100%, 3px 92%, 9px 12%, 13px 0, 190px 0, 195px 12%, 200px 92%, 100% 100%); position: relative; z-index: 2; color: #e4e4e4; }
.x { color: #1f1f1f; width: 8px; }
.glow { position: absolute; right: 77px; top: -23px; width: 70px; height: 70px; border-radius: 50%; background: radial-gradient(#1c3a1a10, #1d5a1870); display: flex; align-items: center; justify-content: center; pointer-events: none; }
.win { display: flex; height: 15px; padding-right: 2px; gap: 1px; }
.win button { background: linear-gradient(#4a4a4a, #2c2c2c); border: 1px solid #8b8b8b; border-top: 0; }

.menubar { flex: none; height: 19px; margin-top: 1px; display: flex; justify-content: space-between; align-items: center; background: linear-gradient(#2a2a2a, #080808); padding: 0 9px 0 10px; border-bottom: 1px solid #000; }
.menubar nav { display: flex; gap: 20px; }
.menubar p { color: #9b9b9b; }
.menubar a { color: #84b4f2; font-size: 13px; text-decoration: none; margin-left: 3px; }

.work { flex: 1; min-height: 0; display: flex; gap: 5px; padding: 1px 1px 0; }
.left { flex: none; width: 250px; display: flex; flex-direction: column; gap: 6px; }
.center { flex: 1; min-width: 0; display: flex; flex-direction: column; }
.right { flex: none; width: 417px; }
.dock { display: flex; flex-direction: column; min-height: 0; }
.blueprint { flex: 1; }
.tab { flex: none; width: 150px; height: 21px; margin-left: 4px; display: flex; align-items: center; gap: 6px; padding: 0 9px 0 6px; background: linear-gradient(#666, #5f5f5f); border-radius: 3px 3px 0 0; }
.tab span { flex: 1; min-width: 0; overflow: hidden; white-space: nowrap; }
.gold { border-top: 1px solid #b39322; }
.frame { background: #5f5f5f; padding: 2px; border-radius: 2px; flex: 1; min-height: 0; }
.comps .frame { flex: none; height: 265px; }
.inner { background: #3e3e3e; height: 100%; border-radius: 3px; }
.row-tools { display: flex; align-items: center; height: 32px; padding: 0 3px; gap: 6px; border-bottom: 1px solid #555; }
.green { height: 24px; width: 83px; padding-left: 2px; gap: 2px; justify-content: flex-start; background: #4fa552; border: 1px solid #3d8a40; color: #fff; }
.green.big { height: 25px; width: 148px; padding: 0 8px 0 6px; justify-content: space-between; font-size: 14px; font-weight: 700; }
.search { flex: 1; min-width: 0; height: 18px; display: flex; align-items: center; padding: 0 1px 0 5px; background: #cbcbcb; border-radius: 2px; color: #111; }
.search input { flex: 1; width: 0; background: none; padding: 0; }
.search input::placeholder { color: #8b8b8b; opacity: 1; }
.self { display: flex; align-items: center; gap: 8px; height: 22px; margin: 0 4px; padding: 0 0 3px 2px; border-bottom: 1px solid #606060; color: #c6c6c6; }
.bare { gap: 4px; }

.tree { font-size: 13px; color: #cfcfcf; white-space: nowrap; }
.tree li { display: flex; align-items: center; height: 20px; }
.stack .tree li { padding-top: 1px; }
.ico { margin-right: 3px; }
.small { font-size: 12px; padding-top: 4px; margin: 0 2px; }
.small svg:first-child:not(.ico) { margin-right: 2px; }
.lv0 { padding-left: 1px; }
.lv1 { padding-left: 11px; }
.lv2 { padding-left: 30px; }
.sel { background: #dda20b; color: #111; }

.stack { display: flex; flex-direction: column; gap: 2px; padding: 2px; }
.block { background: #3e3e3e; border-radius: 3px; flex: none; }
.tools { display: flex; align-items: center; height: 32px; padding: 0 9px 0 4px; margin-bottom: 2px; gap: 2px; }
.tools .search { flex: none; width: 113px; }
.tools .bare { margin-left: auto; }
.block h3 { height: 24px; display: flex; align-items: center; gap: 2px; padding: 0 2px 0 1px; background: #2f2f2f; border-radius: 3px; font-size: 13px; font-weight: 700; color: #e0e0e0; }
.block h3 i { width: 7px; }
.block h3 small { font-size: 11px; font-weight: 400; color: #858585; margin-left: 2px; padding-top: 2px; text-shadow: none; }
.block h3 button { margin-left: auto; width: 20px; height: 18px; background: #424242; border-radius: 2px; color: #fff; }
.in0 { padding-left: 1px; }
.in0 > svg:first-child { margin-right: 2px; }
.in1 { padding-left: 20px; }
.in2 { padding-left: 10px; }
.tree li.head { height: 18px; padding-left: 1px; gap: 2px; font-weight: 700; color: #dedede; }
.lid { width: 16px; height: 14px; margin: 0 4px 0 auto; background: #6b6b6b; border-radius: 2px; }

/* toolbar */
.toolbar { flex: none; height: 62px; padding: 3px 2px 2px; display: flex; background: linear-gradient(135deg, #b39322 8px, #5f5f5f 9px); }
.tools-in { display: flex; background: #3e3e3e; border-radius: 3px; padding-right: 4px; color: #e2e2e2; white-space: nowrap; }
.tools-in hr { width: 1px; margin: 0; border: 0; background: #5c5c5c; }
.tool { flex-direction: column; justify-content: flex-start; }
.tool svg { width: 39px; height: 39px; margin-bottom: 1px; }
.play svg { margin-right: 6px; }
.drop { color: #b4b4b4; }
.debug { width: 159px; margin-left: 2px; padding-top: 14px; display: flex; flex-direction: column; align-items: center; gap: 1px; }
.pick { display: grid; align-items: center; }
.pick > * { grid-area: 1 / 1; }
.pick svg { justify-self: end; margin-right: 7px; color: #222; pointer-events: none; }
.pick select { width: 100%; height: 100%; padding: 0 5px; background: none; opacity: 1; }
.white { width: 100%; height: 22px; background: linear-gradient(#dedede, #cbcbcb); border: 1px solid #eee; color: #000; text-shadow: none; }

.w20 { width: 20px; } .w22 { width: 22px; } .w23 { width: 23px; } .w24 { width: 24px; } .w25 { width: 25px; } .w29 { width: 29px; }
.w32 { width: 32px; } .w37 { width: 37px; } .w41 { width: 41px; } .w43 { width: 43px; } .w47 { width: 47px; } .w52 { width: 52px; }
.w54 { width: 54px; } .w55 { width: 55px; } .w77 { width: 77px; } .w95 { width: 95px; }

.view-tabs { display: flex; gap: 1px; padding: 6px 0 0 4px; }
.view-tabs .tab { margin: 0; }
.off.tab { background: #434343; }
.viewport { position: relative; flex: 1; min-height: 0; border: 2px solid #5f5f5f; background: #252525; }
.stage { width: 100%; height: 100%; }
.overlay { position: absolute; inset: 4px 6px auto 5px; display: flex; justify-content: space-between; }
.pills { display: flex; gap: 5px; height: 24px; font-weight: 700; color: #2c2c2c; }
.left-pills { gap: 6px; }
.pill { background: #868686; border-radius: 6px; padding: 0 4px; gap: 3px; }
.group { display: flex; background: #868686; border-radius: 6px; overflow: hidden; }
.group button { height: 24px; }
.apart { margin-left: 3px; }
.on { background: #94590f; border-right: 1px solid #111; }
.num-btn { display: flex; flex-direction: column; align-items: center; justify-content: center; line-height: 14px; gap: 3px; padding-top: 1px; }
.speed { gap: 9px; }

/* details */
.details { display: flex; flex-direction: column; }
.detail-tools { display: flex; align-items: center; height: 26px; padding: 0 4px; }
.detail-tools .bare { margin-left: 3px; }
.matrix { width: 26px; height: 22px; margin-left: 9px; background: linear-gradient(#bdbdbd, #939393); border: 1px solid #d6d6d6; border-radius: 2px; }
.props { position: relative; flex: 1; min-height: 0; overflow: hidden; display: flex; flex-direction: column; gap: 2px; font-size: 11px; }
.sec { flex: none; background: #3e3e3e; border-radius: 3px; overflow: hidden; }
.sec h3 { height: 22px; display: flex; align-items: center; gap: 4px; padding-left: 3px; background: #2f2f2f; font-size: 13px; color: #e2e2e2; }
.body { padding-bottom: 13px; background: linear-gradient(#1f1f1f, #1f1f1f) 139px 0 / 1px calc(100% - 2px) no-repeat; }
.body.tight { padding-bottom: 2px; }
.prop { display: flex; height: 24px; }
.prop.short { height: 22px; }
.prop.mid { height: 26px; }
.prop.tall { height: 28px; }
.name { position: relative; flex: none; width: 139px; padding: 1px 0 0 16px; display: flex; align-items: center; overflow: hidden; white-space: nowrap; color: #c4c4c4; }
.bright .name { color: #dadada; }
.dim .name { color: #6f6f6f; }
.name .shut { margin: 0 5px 0 -11px; color: #aaa; }
.name .caret { margin-left: 5px; }
.val { flex: 1; min-width: 0; display: flex; align-items: center; padding-left: 4px; }
.box { width: 125px; height: 17px; padding: 0 5px; background: #d7d7d7; border-radius: 3px; color: #222; }
.val input[type='checkbox'] { width: 14px; height: 14px; margin-left: 1px; background: #adadad; border-radius: 2px; display: grid; place-items: center; }
.val input[type='checkbox']:checked { background: #dcdcdc; }
.val input[type='checkbox']:checked::before { content: ''; width: 10px; height: 10px; background: #5c5c5c; clip-path: polygon(0 55%, 18% 38%, 38% 58%, 82% 5%, 100% 20%, 40% 92%); }
.flat { width: 124px; height: 20px; background: #868686; border: 1px solid #6a6a6a; color: #333; }
.shiny { width: 105px; height: 20px; background: linear-gradient(#dcdcdc, #a2a2a2); border: 1px solid #e4e4e4; color: #111; }
.shiny svg { color: #000; }
.axis, .num { display: flex; align-items: center; height: 17px; background: #d7d7d7; border-radius: 3px; color: #222; overflow: hidden; }
.axis { width: 71px; margin-right: 2px; padding-right: 5px; }
.axis span { width: 11px; height: 17px; text-align: center; color: #fff; font-size: 12px; }
.axis input { flex: 1; width: 0; padding: 0 0 0 8px; background: none; }
.axX span { background: #cf2402; } .axY span { background: #5fa502; } .axZ span { background: #2a7ef0; }
.num { width: 105px; padding: 0 6px 0 4px; }
.num input { flex: 1; width: 0; padding: 0; background: none; }
.num.off { width: 77px; margin-right: 3px; }
.num.off span { width: 13px; }
.axis svg, .num svg { color: #111; }
.dim .num { background: #7d7d7d; color: #3a3a3a; }
.dim .num svg { color: #2a2a2a; }
.lock { margin-left: 1px; }
.socket { width: 75px; height: 21px; margin-left: 1px; padding: 0 4px; background: #797979; color: #cfcfcf; }
.s1 { margin-left: 6px; } .s2 { margin-left: 12px; }
.reset { margin-left: 8px; color: #e6e62a; }
.reset.far { margin-left: 20px; }
.more { width: 100%; height: 14px; padding-right: 15px; background: #454545; border-top: 1px solid #2f2f2f; }
.scroll { position: absolute; right: 3px; top: 1px; bottom: 3px; width: 10px; background: linear-gradient(#6a6a6a, #6a6a6a) center / 1px 100% no-repeat; }
.scroll i { display: block; height: 67%; background: #cbcbcb; border-radius: 1px; }

/* taskbar */
.taskbar { flex: none; height: 41px; display: flex; background: #0a0808; color: #fff; font: 11px/18px "Open Sans", sans-serif; }
.fixed-icons { display: flex; }
.fixed-icons button, .apps button { width: 48px; height: 41px; }
.apps { display: flex; gap: 1px; margin-left: 3px; flex: 1; }
.apps .run { background: linear-gradient(#b9b4b4, #b9b4b4) center bottom / 40px 2px no-repeat; }
.apps .run.active { background: linear-gradient(#b9b4b4, #b9b4b4) center bottom / 48px 2px no-repeat, #3a3838; }
.tray { display: flex; align-items: center; gap: 8px; padding-right: 11px; border-right: 1px solid #444; margin-right: 3px; }
.tray .up { margin: 0 1px 0 14px; }
.tray span { margin-left: 4px; }
.clock { display: flex; flex-direction: column; align-items: center; margin-left: 2px; }
.note { margin-left: 8px; }
</style>
